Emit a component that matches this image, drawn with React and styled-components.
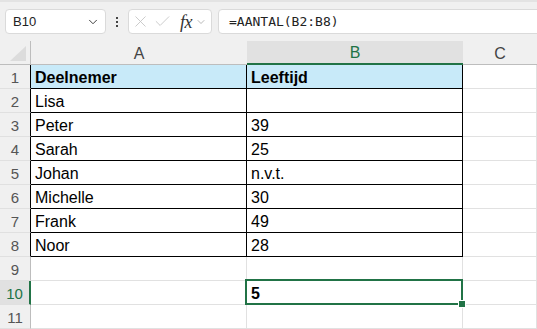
import styled, { createGlobalStyle } from 'styled-components';
import { ChevronDown, X, Check } from 'lucide-react';

const GlobalStyle = createGlobalStyle`
  html, body {
    margin: 0;
    padding: 0;
    background: #ffffff;
  }
  * {
    box-sizing: border-box;
  }
`;

const rows = [
  { a: 'Deelnemer', b: 'Leeftijd', head: true },
  { a: 'Lisa', b: '' },
  { a: 'Peter', b: '39' },
  { a: 'Sarah', b: '25' },
  { a: 'Johan', b: 'n.v.t.' },
  { a: 'Michelle', b: '30' },
  { a: 'Frank', b: '49' },
  { a: 'Noor', b: '28' },
  { a: '', b: '' },
  { a: '', b: '5', selected: true },
  { a: '', b: '' },
];

const App = () => {
  return (
    <>
      <GlobalStyle />
      <Page>
        <Toolbar>
          <NameBox>
            <span>B10</span>
            <ChevronDown size={14} strokeWidth={1.6} color="#333" />
          </NameBox>
          <Dots>
            <i />
            <i />
            <i />
          </Dots>
          <FormulaTools>
            <X size={19} strokeWidth={1.1} color="#c4c4c4" />
            <Check size={19} strokeWidth={1.1} color="#c4c4c4" />
            <Fx>fx</Fx>
            <ChevronDown size={12} strokeWidth={1.4} color="#9a9a9a" />
          </FormulaTools>
          <FormulaInput>=AANTAL(B2:B8)</FormulaInput>
        </Toolbar>

        <Sheet>
          <Corner>
            <svg width="16" height="15" viewBox="0 0 16 15">
              <polygon points="16,0 16,15 0,15" fill="#dcdcdc" />
            </svg>
          </Corner>
          <ColHeader>A</ColHeader>
          <ColHeader $active>B</ColHeader>
          <ColHeader>C</ColHeader>

          {rows.map((row, i) => {
            const boxed = i < 8;
            return [
              <RowHeader key={`h${i}`} $active={row.selected} $boxed={boxed}>
                {i + 1}
              </RowHeader>,
              <Cell key={`a${i}`} $boxed={boxed} $head={row.head}>
                {row.a}
              </Cell>,
              <Cell
                key={`b${i}`}
                $boxed={boxed}
                $head={row.head}
                $selected={row.selected}
              >
                {row.b}
                {row.selected && (
                  <Selection>
                    <FillHandle />
                  </Selection>
                )}
              </Cell>,
              <Cell key={`c${i}`} />,
            ];
          })}
        </Sheet>
      </Page>
    </>
  );
};

const Page = styled.div`
  width: 537px;
  height: 329px;
  overflow: hidden;
  background: #ffffff;
  font-family: 'Liberation Sans', Arial, sans-serif;
`;

const Toolbar = styled.div`
  display: flex;
  align-items: center;
  height: 41px;
  padding: 0 0 0 5px;
  background: #f0f0f0;
  border-top: 2px solid #e3e3e3;
`;

const NameBox = styled.div`
  display: flex;
  align-items: center;
  justify-content: space-between;
  width: 101px;
  height: 25px;
  padding: 0 5px 0 7px;
  background: #ffffff;
  border: 1px solid #dadada;
  border-radius: 4px;
  font-size: 13px;
  color: #222;
`;

const Dots = styled.div`
  display: flex;
  flex-direction: column;
  gap: 2px;
  width: 22px;
  align-items: center;

  i {
    display: block;
    width: 2px;
    height: 2px;
    background: #444;
  }
`;

const FormulaTools = styled.div`
  display: flex;
  align-items: center;
  width: 84px;
  height: 25px;
  padding: 0 2px 0 2px;
  gap: 3px;
  background: #ffffff;
  border: 1px solid #dadada;
  border-radius: 4px;
`;

const Fx = styled.span`
  margin-left: 5px;
  font-family: 'Liberation Serif', 'Times New Roman', serif;
  font-style: italic;
  font-size: 18px;
  color: #333;
  letter-spacing: -0.5px;
  line-height: 1;
`;

const FormulaInput = styled.div`
  flex: 1;
  display: flex;
  align-items: center;
  height: 25px;
  margin-left: 6px;
  margin-right: -6px;
  padding-left: 10px;
  background: #ffffff;
  border: 1px solid #dadada;
  border-radius: 4px;
  font-family: 'DejaVu Sans Mono', 'Liberation Mono', monospace;
  font-size: 13px;
  color: #222;
`;

const Sheet = styled.div`
  display: grid;
  grid-template-columns: 31px 216px 216px 1fr;
  grid-template-rows: 24px repeat(11, 24px);
`;

const Corner = styled.div`
  display: flex;
  align-items: flex-end;
  justify-content: flex-end;
  padding: 0 4px 3px 0;
  background: #f0f0f0;
  border-right: 1px solid #bdbdbd;
  border-bottom: 1px solid #bdbdbd;
`;

const ColHeader = styled.div`
  display: flex;
  align-items: center;
  justify-content: center;
  padding-top: 2px;
  background: ${(p) => (p.$active ? '#e1e1e1' : '#f0f0f0')};
  border-bottom: ${(p) => (p.$active ? '2px solid #217346' : '1px solid #bdbdbd')};
  color: ${(p) => (p.$active ? '#217346' : '#444')};
  font-size: 16px;
`;

const RowHeader = styled.div`
  display: flex;
  align-items: center;
  justify-content: center;
  padding-top: 1px;
  background: ${(p) => (p.$active ? '#e1e1e1' : '#f0f0f0')};
  border-bottom: 1px solid #e0e0e0;
  border-right: ${(p) =>
    p.$active ? '2px solid #217346' : p.$boxed ? '1px solid #000' : '1px solid #bdbdbd'};
  color: ${(p) => (p.$active ? '#217346' : '#555')};
  font-size: 15px;
`;

const Cell = styled.div`
  position: relative;
  z-index: ${(p) => (p.$selected ? 2 : 'auto')};
  display: flex;
  align-items: flex-end;
  padding: 0 4px 1px 4px;
  background: ${(p) => (p.$head ? '#c8eaf9' : '#ffffff')};
  border-right: 1px solid ${(p) => (p.$boxed ? '#000' : '#e1e1e1')};
  border-bottom: 1px solid ${(p) => (p.$boxed ? '#000' : '#e1e1e1')};
  font-size: 16px;
  font-weight: ${(p) => (p.$head || p.$selected ? 700 : 400)};
  color: #000;
  line-height: 18px;
  white-space: nowrap;
`;

const Selection = styled.div`
  position: absolute;
  top: -2px;
  left: -2px;
  right: -1px;
  bottom: -1px;
  border: 2px solid #217346;
  pointer-events: none;
`;

const FillHandle = styled.div`
  position: absolute;
  right: -5px;
  bottom: -5px;
  width: 8px;
  height: 8px;
  background: #217346;
  border: 1px solid #ffffff;
`;

export default App;
